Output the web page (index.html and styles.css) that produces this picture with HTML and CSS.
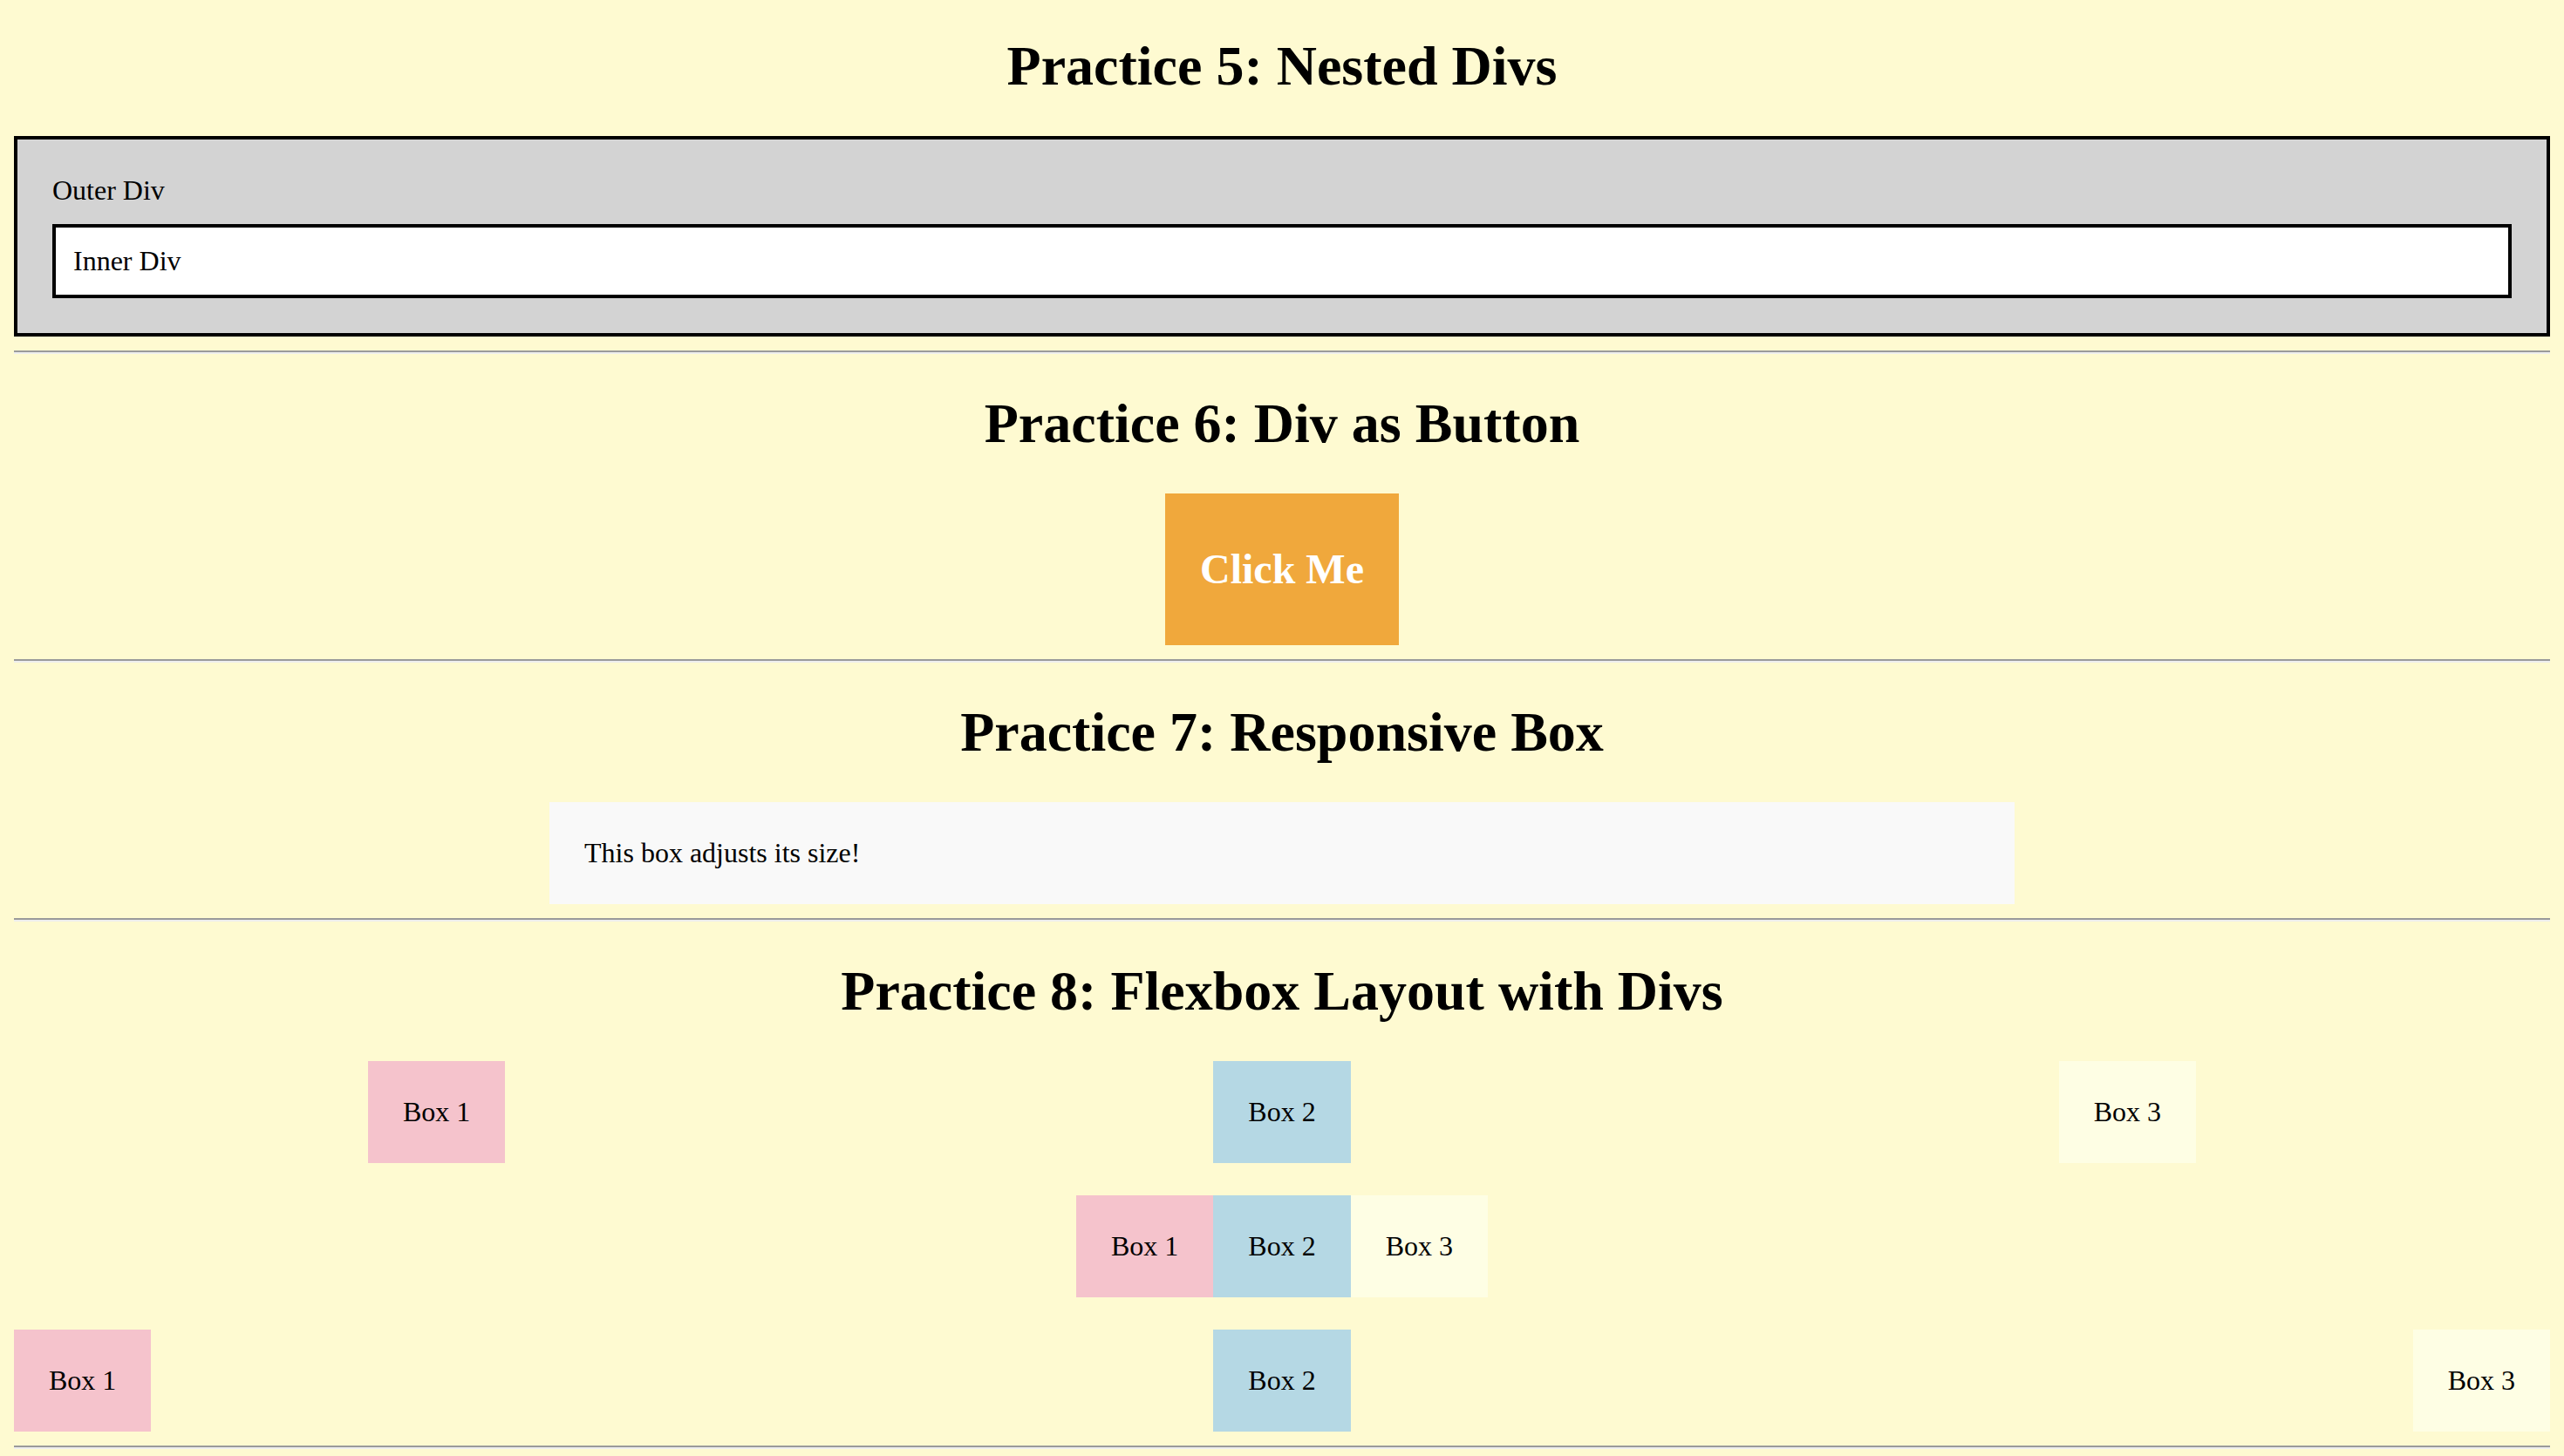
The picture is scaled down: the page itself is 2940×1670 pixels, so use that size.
FILE: index.html
```html
<!DOCTYPE html>
<html lang="en">
<head>
<meta charset="utf-8">
<title>Div Practice</title>
<link rel="stylesheet" href="styles.css">
</head>
<body>
  <section class="section first">
    <h1 class="title">Practice 5: Nested Divs</h1>
    <div class="outer">
      Outer Div
      <div class="inner">Inner Div</div>
    </div>
  </section>
  <hr class="rule">
  <section class="section">
    <h1 class="title">Practice 6: Div as Button</h1>
    <div class="btn-wrap"><div class="btn">Click Me</div></div>
  </section>
  <hr class="rule">
  <section class="section">
    <h1 class="title">Practice 7: Responsive Box</h1>
    <div class="responsive">This box adjusts its size!</div>
  </section>
  <hr class="rule">
  <section class="section">
    <h1 class="title">Practice 8: Flexbox Layout with Divs</h1>
    <div class="flex around">
      <div class="box b1">Box 1</div>
      <div class="box b2">Box 2</div>
      <div class="box b3">Box 3</div>
    </div>
    <div class="flex center">
      <div class="box b1">Box 1</div>
      <div class="box b2">Box 2</div>
      <div class="box b3">Box 3</div>
    </div>
    <div class="flex between">
      <div class="box b1">Box 1</div>
      <div class="box b2">Box 2</div>
      <div class="box b3">Box 3</div>
    </div>
  </section>
  <hr class="rule">
</body>
</html>
```

FILE: styles.css
```css
html {
  background: #fefad1;
}
body {
  margin: 0 16px 16px;
  padding-top: 0;
  background: #fefad1;
  color: #000;
  font-family: "Liberation Serif", "Times New Roman", serif;
  font-size: 32px;
  line-height: normal;
}
.section {
  display: block;
}
.first {
  padding-top: 0.02px;
}
.title {
  font-size: 64px;
  font-weight: bold;
  text-align: center;
  margin: 43px 0;
}
.first .title {
  margin-top: 39px;
}
.outer {
  background: #d3d3d3;
  border: 4px solid #000;
  padding: 40px;
}
.inner {
  background: #fff;
  border: 4px solid #000;
  padding: 20px;
  margin-top: 20px;
}
.rule {
  margin: 16px 0;
  height: 0;
  border: 0;
  border-top: 2px solid #9a9a9a;
  border-bottom: 2px solid #eeeeee;
}
.btn-wrap {
  display: flex;
  justify-content: center;
}
.btn {
  background: #f0a83c;
  color: #fff;
  font-weight: bold;
  font-size: 48px;
  line-height: 56px;
  padding: 59px 40px;
}
.responsive {
  background: #f9f9f9;
  max-width: 1600px;
  padding: 40px;
  margin: 0 auto;
}
.flex {
  display: flex;
  margin-bottom: 37px;
}
.flex:last-child {
  margin-bottom: 0;
}
.around { justify-content: space-around; }
.center { justify-content: center; }
.between { justify-content: space-between; }
.box {
  padding: 40px;
  line-height: 37px;
}
.b1 { background: #f5c3cc; }
.b2 { background: #b5d8e4; }
.b3 { background: #fefee4; }
```
